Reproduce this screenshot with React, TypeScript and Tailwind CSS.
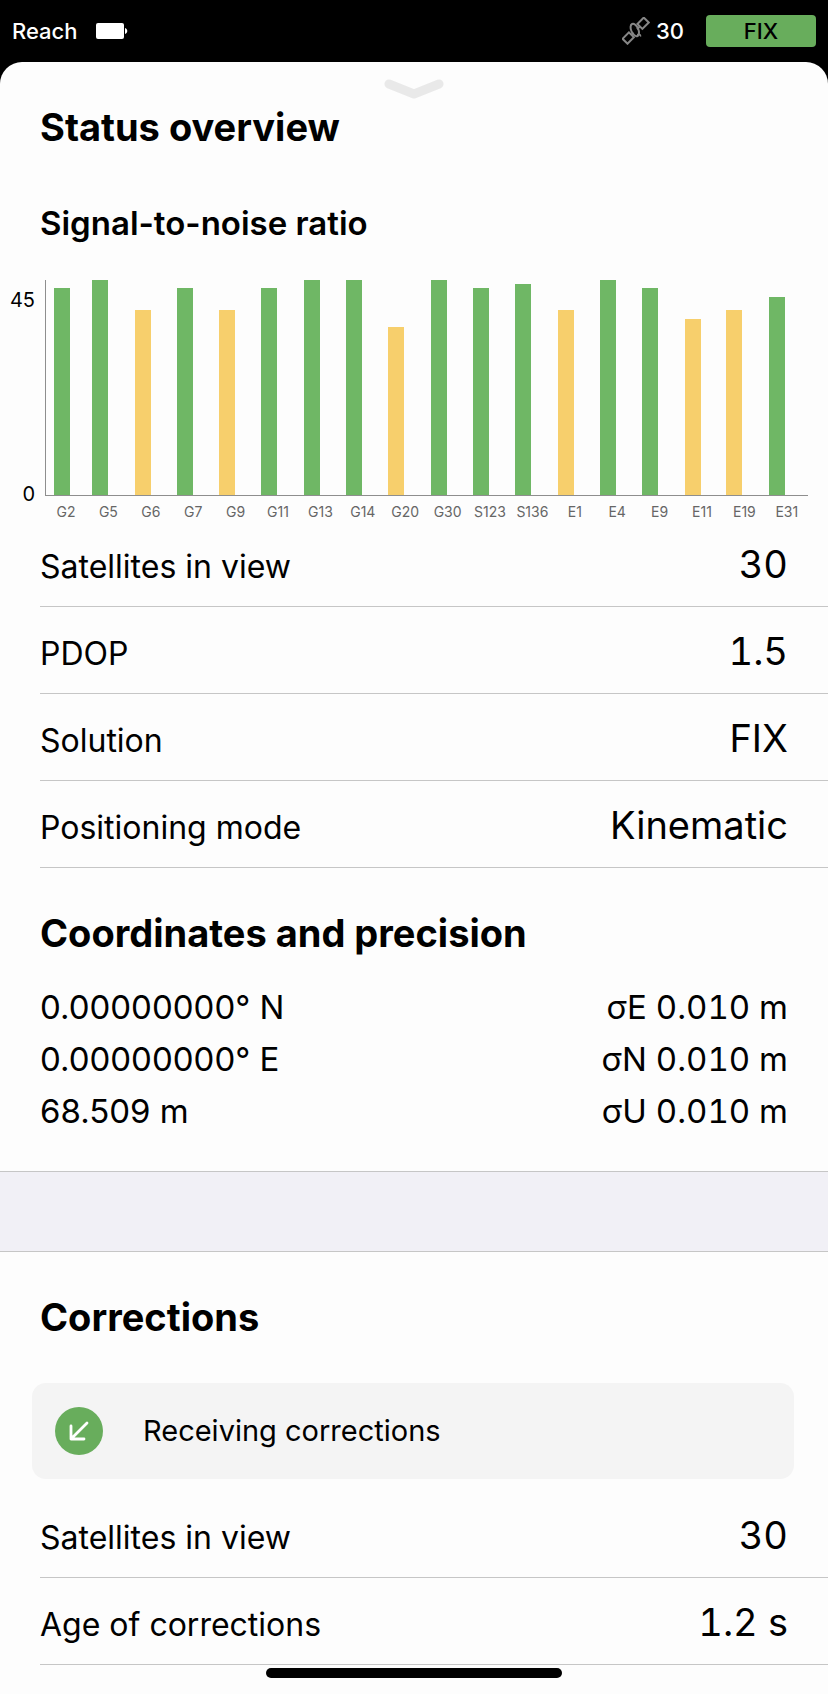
import React from 'react';

const GREEN = '#6fb765';
const YELLOW = '#f7cf6c';

// x and top are positions inside the chart's viewBox
const satellites = [
  { id: 'G2', x: 54, top: 49, color: GREEN },
  { id: 'G5', x: 92, top: 41, color: GREEN },
  { id: 'G6', x: 135, top: 71, color: YELLOW },
  { id: 'G7', x: 177, top: 49, color: GREEN },
  { id: 'G9', x: 219, top: 71, color: YELLOW },
  { id: 'G11', x: 261, top: 49, color: GREEN },
  { id: 'G13', x: 304, top: 41, color: GREEN },
  { id: 'G14', x: 346, top: 41, color: GREEN },
  { id: 'G20', x: 388, top: 88, color: YELLOW },
  { id: 'G30', x: 431, top: 41, color: GREEN },
  { id: 'S123', x: 473, top: 49, color: GREEN },
  { id: 'S136', x: 515, top: 45, color: GREEN },
  { id: 'E1', x: 558, top: 71, color: YELLOW },
  { id: 'E4', x: 600, top: 41, color: GREEN },
  { id: 'E9', x: 642, top: 49, color: GREEN },
  { id: 'E11', x: 685, top: 80, color: YELLOW },
  { id: 'E19', x: 726, top: 71, color: YELLOW },
  { id: 'E31', x: 769, top: 58, color: GREEN },
];

const statusRows = [
  { label: 'Satellites in view', value: '30' },
  { label: 'PDOP', value: '1.5' },
  { label: 'Solution', value: 'FIX' },
  { label: 'Positioning mode', value: 'Kinematic' },
];

const correctionRows = [
  { label: 'Satellites in view', value: '30' },
  { label: 'Age of corrections', value: '1.2 s' },
];

function SatelliteIcon() {
  return (
    <svg className="h-7 w-7" viewBox="0 0 28 28" fill="none" stroke="#868686" strokeWidth="2">
      <g transform="rotate(-45 14 14)">
        <rect x="-1" y="10" width="9" height="7" />
        <rect x="20" y="10" width="9" height="7" />
        <path d="M8 13.5h3M16 13.5h4" />
      </g>
      <ellipse cx="12.8" cy="13" rx="3.6" ry="6.6" transform="rotate(-24 12.8 13)" />
      <path d="M15 17.5l3 .2.8 1.8" strokeWidth="1.6" />
    </svg>
  );
}

function StatusBar() {
  return (
    <header className="flex h-[62px] items-center justify-between bg-black px-3 text-white">
      <div className="flex items-center gap-[18px]">
        <span className="text-[22px] font-medium">Reach</span>
        <svg className="h-4 w-8" viewBox="0 0 32 16" fill="white">
          <rect width="28" height="16" rx="2" />
          <path d="M29 5c3 1 3 5 0 6z" />
        </svg>
      </div>
      <div className="flex items-center">
        <SatelliteIcon />
        <span className="ml-[6px] text-[22px] font-medium">30</span>
        <span className="ml-[22px] flex h-8 w-[110px] items-center justify-center rounded-sm bg-[#68ad5c] text-[22px] font-medium text-black">
          FIX
        </span>
      </div>
    </header>
  );
}

function SignalChart() {
  return (
    <svg className="block w-full" viewBox="0 4 828 277" role="img" aria-label="Signal-to-noise ratio">
      <g fontSize="20" textAnchor="end" fill="#000">
        <text x="35" y="68">45</text>
        <text x="35" y="262">0</text>
      </g>
      <path d="M45 41V256H808" fill="none" stroke="#8e8e8e" strokeWidth="1" shapeRendering="crispEdges" />
      {satellites.map((sat, i) => (
        <g key={sat.id}>
          <rect x={sat.x} y={sat.top} width="16" height={256 - sat.top} fill={sat.color} />
          <text x={66 + i * 42.4} y="278" fontSize="14" textAnchor="middle" fill="#666">
            {sat.id}
          </text>
        </g>
      ))}
    </svg>
  );
}

function Rows({ rows }: { rows: { label: string; value: string }[] }) {
  return (
    <dl className="pl-10">
      {rows.map((row) => (
        <div
          key={row.label}
          className="flex h-[87px] items-baseline justify-between border-b border-[#c6c6c6] pr-10 pt-5"
        >
          <dt className="text-[32px] leading-[48px]">{row.label}</dt>
          <dd className="text-[38px] leading-[48px] tabular-nums">{row.value}</dd>
        </div>
      ))}
    </dl>
  );
}

export default function App() {
  return (
    <div className="bg-black font-['Inter',sans-serif] text-black">
      <StatusBar />
      <main className="relative rounded-t-[22px] bg-[#fdfdfd] pb-[29px]">
        <button type="button" aria-label="Collapse" className="absolute left-1/2 top-4 -translate-x-1/2">
          <svg className="h-6 w-[60px]" viewBox="0 0 60 24" fill="none" stroke="#e9e9e9" strokeWidth="9" strokeLinecap="round" strokeLinejoin="round">
            <path d="M5 6L30 16L55 6" />
          </svg>
        </button>

        <section>
          <h1 className="px-10 pt-[41px] text-[38px] font-bold leading-[48px]">Status overview</h1>
          <h2 className="px-10 pt-[52px] text-[33px] font-semibold leading-[40px]">Signal-to-noise ratio</h2>
          <SignalChart />
          <Rows rows={statusRows} />
        </section>

        <section className="border-b border-[#c6c6c6] pb-[34px]">
          <h1 className="px-10 pt-[41px] text-[38px] font-bold leading-[48px]">Coordinates and precision</h1>
          <div className="flex justify-between px-10 pt-6 text-[33px] leading-[52px]">
            <div>
              <p>0.00000000° N</p>
              <p>0.00000000° E</p>
              <p>68.509 m</p>
            </div>
            <div className="text-right tabular-nums">
              <p>σE 0.010 m</p>
              <p>σN 0.010 m</p>
              <p>σU 0.010 m</p>
            </div>
          </div>
        </section>

        <div className="h-[79px] bg-[#f1f0f6]" />

        <section className="border-t border-[#c6c6c6]">
          <h1 className="px-10 pt-[41px] text-[38px] font-bold leading-[48px]">Corrections</h1>
          <div className="mb-3 ml-8 mr-[34px] mt-[42px] flex h-24 items-center gap-10 rounded-[14px] bg-[#f4f4f4] pl-[23px]">
            <svg className="h-12 w-12" viewBox="0 0 48 48" fill="none">
              <circle cx="24" cy="24" r="24" fill="#68ad5c" />
              <path d="M32 16L16 32M16 19V32H29" stroke="white" strokeWidth="2.8" strokeLinecap="round" strokeLinejoin="round" />
            </svg>
            <span className="text-[29px]">Receiving corrections</span>
          </div>
          <Rows rows={correctionRows} />
        </section>

        <div className="absolute bottom-4 left-1/2 h-[10px] w-[296px] -translate-x-1/2 rounded-full bg-black" />
      </main>
    </div>
  );
}
